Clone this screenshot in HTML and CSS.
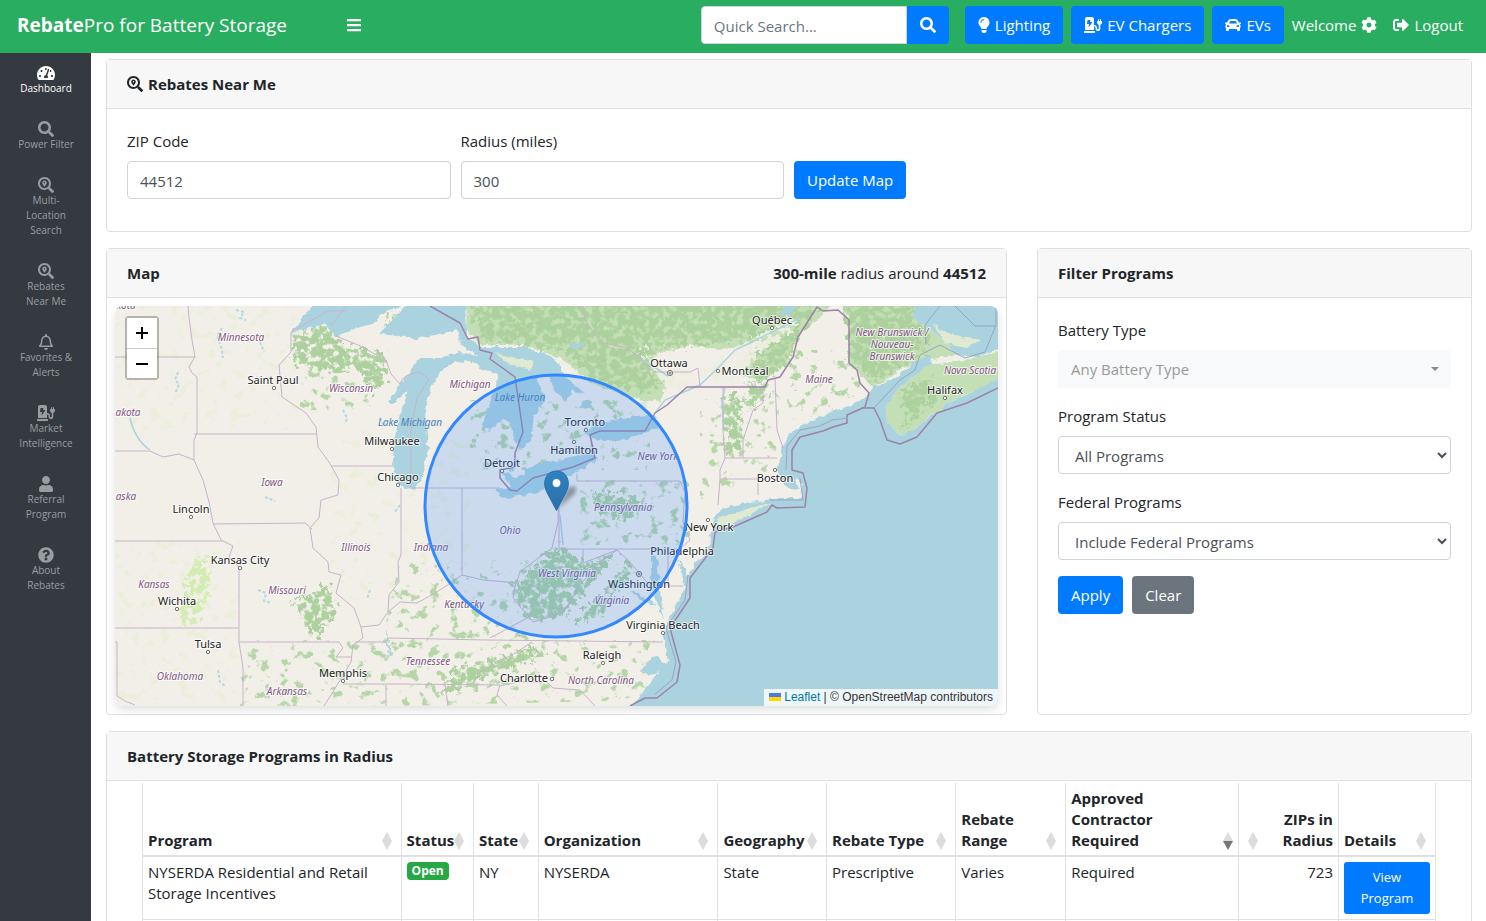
FILE: index.html
```html
<!DOCTYPE html>
<html lang="en">
<head>
<meta charset="utf-8">
<meta name="viewport" content="width=device-width, initial-scale=1">
<title>RebatePro for Battery Storage</title>
<link rel="stylesheet" href="styles.css">
</head>
<body>
<svg class="sprite" aria-hidden="true">
  <symbol id="i-search" viewBox="0 0 512 512"><path d="M505 442.7L405.3 343c-4.5-4.5-10.6-7-17-7H372c27.6-35.3 44-79.7 44-128C416 93.1 322.9 0 208 0S0 93.1 0 208s93.1 208 208 208c48.3 0 92.7-16.4 128-44v16.3c0 6.4 2.5 12.5 7 17l99.7 99.7c9.4 9.4 24.6 9.4 33.9 0l28.3-28.3c9.4-9.4 9.4-24.6.1-34zM208 336c-70.7 0-128-57.2-128-128 0-70.7 57.2-128 128-128 70.7 0 128 57.2 128 128 0 70.7-57.2 128-128 128z"/></symbol>
  <symbol id="i-locate" viewBox="0 0 512 512"><path d="M505.04 442.66l-99.71-99.69c-4.5-4.5-10.6-7-17-7h-16.3c27.6-35.3 44-79.69 44-127.99C416.03 93.09 322.92 0 208.02 0S0 93.09 0 207.98s93.11 207.98 208.02 207.98c48.3 0 92.71-16.4 128.01-44v16.3c0 6.4 2.5 12.5 7 17l99.71 99.69c9.4 9.4 24.6 9.4 33.9 0l28.3-28.3c9.4-9.4 9.4-24.59.1-33.99zm-297.02-90.7c-79.54 0-144-64.34-144-143.98 0-79.53 64.35-143.98 144-143.98 79.54 0 144 64.34 144 143.98 0 79.53-64.35 143.98-144 143.98zm.02-239.96c-40.78 0-73.84 33.05-73.84 73.83 0 32.96 48.26 93.05 66.75 114.86a9.24 9.24 0 0 0 14.18 0c18.49-21.81 66.75-81.89 66.75-114.86 0-40.78-33.06-73.83-73.84-73.83zm0 96c-13.26 0-24-10.75-24-24 0-13.26 10.75-24 24-24s24 10.74 24 24c0 13.25-10.75 24-24 24z"/></symbol>
  <symbol id="i-bars" viewBox="0 0 448 512"><path d="M16 60h416a16 16 0 0 1 16 16v40a16 16 0 0 1-16 16H16a16 16 0 0 1-16-16V76a16 16 0 0 1 16-16zm0 160h416a16 16 0 0 1 16 16v40a16 16 0 0 1-16 16H16a16 16 0 0 1-16-16v-40a16 16 0 0 1 16-16zm0 160h416a16 16 0 0 1 16 16v40a16 16 0 0 1-16 16H16a16 16 0 0 1-16-16v-40a16 16 0 0 1 16-16z"/></symbol>
  <symbol id="i-user" viewBox="0 0 448 512"><path d="M224 256c70.7 0 128-57.3 128-128S294.7 0 224 0 96 57.3 96 128s57.3 128 128 128zm89.6 32h-16.7c-22.2 10.2-46.9 16-72.9 16s-50.6-5.8-72.9-16h-16.7C60.2 288 0 348.2 0 422.4V464c0 26.5 21.5 48 48 48h352c26.5 0 48-21.5 48-48v-41.6c0-74.2-60.2-134.4-134.4-134.4z"/></symbol>
  <symbol id="i-help" viewBox="0 0 512 512"><path d="M504 256c0 136.997-111.043 248-248 248S8 392.997 8 256C8 119.083 119.043 8 256 8s248 111.083 248 248zM262.655 90c-54.497 0-89.255 22.957-116.549 63.758-3.536 5.286-2.353 12.415 2.715 16.258l34.699 26.31c5.205 3.947 12.621 3.008 16.665-2.122 17.864-22.658 30.113-35.797 57.303-35.797 20.429 0 45.698 13.148 45.698 32.958 0 14.976-12.363 22.667-32.534 33.976C247.128 238.528 216 254.941 216 296v4c0 6.627 5.373 12 12 12h56c6.627 0 12-5.373 12-12v-1.333c0-28.462 83.186-29.647 83.186-106.667 0-58.002-60.165-102-116.531-102zM256 338c-25.365 0-46 20.635-46 46 0 25.364 20.635 46 46 46s46-20.636 46-46c0-25.365-20.635-46-46-46z"/></symbol>
  <symbol id="i-bell" viewBox="0 0 448 512"><path d="M439.39 362.29c-19.32-20.76-55.47-51.99-55.47-154.29 0-77.7-54.48-139.9-127.94-155.16V32c0-17.67-14.32-32-31.98-32s-31.98 14.33-31.98 32v20.84C118.56 68.1 64.08 130.3 64.08 208c0 102.3-36.15 133.53-55.47 154.29-6 6.45-8.66 14.16-8.61 21.71.11 16.4 12.98 32 32.1 32h383.8c19.12 0 32-15.6 32.1-32 .05-7.55-2.61-15.27-8.61-21.71zM67.53 368c21.22-27.97 44.42-74.33 44.53-159.42 0-.2-.06-.38-.06-.58 0-61.86 50.14-112 112-112s112 50.14 112 112c0 .2-.06.38-.06.58.11 85.1 23.31 131.46 44.53 159.42H67.53zM224 512c35.32 0 63.97-28.65 63.97-64H160.03c0 35.35 28.65 64 63.97 64z"/></symbol>
  <symbol id="i-charge" viewBox="0 0 576 512"><path d="M336 448H16c-8.84 0-16 7.16-16 16v32c0 8.84 7.16 16 16 16h320c8.84 0 16-7.16 16-16v-32c0-8.84-7.16-16-16-16zm208-320V80c0-8.84-7.16-16-16-16s-16 7.16-16 16v48h-32V80c0-8.84-7.16-16-16-16s-16 7.16-16 16v48h-16c-8.84 0-16 7.16-16 16v32c0 35.76 23.62 65.69 56 75.93v118.49c0 13.95-9.5 26.92-23.26 29.19C431.22 402.5 416 388.99 416 372v-28c0-48.6-39.4-88-88-88h-8V64c0-35.35-28.65-64-64-64H96C60.65 0 32 28.65 32 64v352h288V304h8c22.09 0 40 17.91 40 40v24.61c0 39.67 28.92 75.16 68.41 79.01C481.71 452.05 520 416.41 520 372V251.93c32.38-10.24 56-40.17 56-75.93v-32c0-8.84-7.16-16-16-16h-16zm-283.91 47.76l-93.7 139c-2.2 3.33-6.21 5.24-10.39 5.24-7.67 0-13.47-6.28-11.67-12.92L167.35 224H108c-7.25 0-12.85-5.59-11.89-11.89l16-107C112.9 99.9 117.98 96 124 96h68c7.88 0 13.62 6.54 11.6 13.21L192 160h57.7c9.24 0 15.01 8.78 10.39 15.76z"/></symbol>
  <symbol id="i-gauge" viewBox="0 0 576 512"><path d="M288 32C128.94 32 0 160.94 0 320c0 52.8 14.25 102.26 39.06 144.8 5.61 9.62 16.3 15.2 27.44 15.2h443c11.14 0 21.83-5.58 27.44-15.2C561.75 422.26 576 372.8 576 320c0-159.06-128.94-288-288-288zm0 64c14.71 0 26.58 10.13 30.32 23.65-1.11 2.26-2.64 4.23-3.45 6.67l-9.22 27.67c-5.13 3.49-10.97 6.01-17.64 6.01-17.67 0-32-14.33-32-32S270.33 96 288 96zM96 384c-17.67 0-32-14.33-32-32s14.33-32 32-32 32 14.33 32 32-14.33 32-32 32zm48-160c-17.67 0-32-14.33-32-32s14.33-32 32-32 32 14.33 32 32-14.33 32-32 32zm246.77-72.41l-61.33 184C343.13 347.33 352 364.54 352 384c0 11.72-3.38 22.55-8.88 32H232.88c-5.5-9.45-8.88-20.28-8.88-32 0-33.94 26.5-61.43 59.9-63.59l61.34-184.01c4.17-12.56 17.73-19.45 30.36-15.17 12.57 4.19 19.35 17.79 15.17 30.36zm14.66 57.2l15.52-46.55c3.47-1.29 7.13-2.23 11.05-2.23 17.67 0 32 14.33 32 32s-14.33 32-32 32c-11.38-.01-20.89-6.28-26.57-15.22zM480 384c-17.67 0-32-14.33-32-32s14.33-32 32-32 32 14.33 32 32-14.33 32-32 32z"/></symbol>
  <symbol id="i-bulb" viewBox="0 0 352 512"><path d="M96.06 454.35c.01 6.29 1.87 12.45 5.36 17.69l17.09 25.69a31.99 31.99 0 0 0 26.64 14.28h61.71a31.99 31.99 0 0 0 26.64-14.28l17.09-25.69a31.989 31.989 0 0 0 5.36-17.69l.04-38.35H96.01l.05 38.35zM0 176c0 44.37 16.45 84.85 43.56 115.78 16.52 18.85 42.36 58.23 52.21 91.45.04.26.07.52.11.78h160.24c.04-.26.07-.51.11-.78 9.85-33.22 35.69-72.6 52.21-91.45C335.55 260.85 352 220.37 352 176 352 78.61 272.91-.3 175.45 0 73.44.31 0 82.97 0 176zm176-80c-44.11 0-80 35.89-80 80 0 8.84-7.16 16-16 16s-16-7.16-16-16c0-61.76 50.24-112 112-112 8.84 0 16 7.16 16 16s-7.16 16-16 16z"/></symbol>
  <symbol id="i-car" viewBox="0 0 512 512"><path d="M499.99 176h-59.87l-16.64-41.6C406.38 91.63 365.57 64 319.5 64h-127c-46.06 0-86.88 27.63-103.99 70.4L71.87 176H12.01C4.2 176-1.53 183.34.37 190.91l6 24C7.7 220.25 12.5 224 18.01 224h20.07C24.65 235.73 16 252.78 16 272v48c0 16.12 6.16 30.67 16 41.93V416c0 17.67 14.33 32 32 32h32c17.67 0 32-14.33 32-32v-32h256v32c0 17.67 14.33 32 32 32h32c17.67 0 32-14.33 32-32v-54.07c9.84-11.25 16-25.8 16-41.93v-48c0-19.22-8.65-36.27-22.07-48H494c5.51 0 10.31-3.75 11.64-9.09l6-24c1.89-7.57-3.84-14.91-11.65-14.91zm-352.06-17.83c7.29-18.22 24.94-30.17 44.57-30.17h127c19.63 0 37.28 11.95 44.57 30.17L384 208H128l19.93-49.83zM96 319.8c-19.2 0-32-12.76-32-31.9S76.8 256 96 256s48 28.71 48 47.85-28.8 15.95-48 15.95zm320 0c-19.2 0-48 3.19-48-15.95S396.8 256 416 256s32 12.76 32 31.9-12.8 31.9-32 31.9z"/></symbol>
  <symbol id="i-cog" viewBox="0 0 512 512"><path d="M487.4 315.7l-42.6-24.6c4.3-23.2 4.3-47 0-70.2l42.6-24.6c4.9-2.8 7.1-8.6 5.5-14-11.1-35.6-30-67.8-54.7-94.6-3.8-4.1-10-5.1-14.8-2.3L380.8 110c-17.9-15.4-38.5-27.3-60.8-35.1V25.8c0-5.6-3.9-10.5-9.4-11.7-36.7-8.2-74.3-7.8-109.2 0-5.5 1.2-9.4 6.1-9.4 11.7V75c-22.2 7.9-42.8 19.8-60.8 35.1L88.7 85.5c-4.9-2.8-11-1.9-14.8 2.3-24.7 26.7-43.6 58.9-54.7 94.6-1.7 5.4.6 11.2 5.5 14L67.3 221c-4.3 23.2-4.3 47 0 70.2l-42.6 24.6c-4.9 2.8-7.1 8.6-5.5 14 11.1 35.6 30 67.8 54.7 94.6 3.8 4.1 10 5.1 14.8 2.3l42.6-24.6c17.9 15.4 38.5 27.3 60.8 35.1v49.2c0 5.6 3.9 10.5 9.4 11.7 36.7 8.2 74.3 7.8 109.2 0 5.5-1.2 9.4-6.1 9.4-11.7v-49.2c22.2-7.9 42.8-19.8 60.8-35.1l42.6 24.6c4.9 2.8 11 1.9 14.8-2.3 24.7-26.7 43.6-58.9 54.7-94.6 1.5-5.5-.7-11.3-5.6-14.1zM256 336c-44.1 0-80-35.9-80-80s35.9-80 80-80 80 35.9 80 80-35.9 80-80 80z"/></symbol>
  <symbol id="i-logout" viewBox="0 0 512 512"><path d="M497 273L329 441c-15 15-41 4.5-41-17v-96H152c-13.3 0-24-10.7-24-24v-96c0-13.3 10.7-24 24-24h136V88c0-21.4 25.9-32 41-17l168 168c9.3 9.4 9.3 24.6 0 34zM192 436v-40c0-6.6-5.4-12-12-12H96c-17.7 0-32-14.3-32-32V160c0-17.7 14.3-32 32-32h84c6.6 0 12-5.4 12-12V76c0-6.6-5.4-12-12-12H96c-53 0-96 43-96 96v192c0 53 43 96 96 96h84c6.6 0 12-5.4 12-12z"/></symbol>
  <symbol id="i-sort" viewBox="0 0 10 18"><path class="sort-up" d="M5 0l5 9H0z"/><path class="sort-down" d="M0 9h10l-5 9z"/></symbol>
</svg>

<header class="topbar">
  <a class="brand" href="#"><b>Rebate</b>Pro for Battery Storage</a>
  <button class="menu-toggle" type="button" aria-label="Toggle menu"><svg class="icon icon-14"><use href="#i-bars"/></svg></button>
  <form class="quick-search">
    <input class="quick-input" type="search" placeholder="Quick Search..." aria-label="Quick Search">
    <button class="quick-button" type="submit" aria-label="Search"><svg class="icon icon-16"><use href="#i-search"/></svg></button>
  </form>
  <nav class="top-links">
    <a class="btn btn-primary" href="#"><svg class="icon icon-bulb"><use href="#i-bulb"/></svg>Lighting</a>
    <a class="btn btn-primary" href="#"><svg class="icon icon-18"><use href="#i-charge"/></svg>EV Chargers</a>
    <a class="btn btn-primary" href="#"><svg class="icon icon-16"><use href="#i-car"/></svg>EVs</a>
    <a class="top-link" href="#">Welcome<svg class="icon icon-16"><use href="#i-cog"/></svg></a>
    <a class="top-link logout" href="#"><svg class="icon icon-16"><use href="#i-logout"/></svg>Logout</a>
  </nav>
</header>

<div class="layout">
  <nav class="sidebar">
    <a class="side-link active" href="#"><svg class="icon icon-side"><use href="#i-gauge"/></svg>Dashboard</a>
    <a class="side-link" href="#"><svg class="icon icon-side"><use href="#i-search"/></svg>Power Filter</a>
    <a class="side-link" href="#"><svg class="icon icon-side"><use href="#i-locate"/></svg>Multi-<br>Location<br>Search</a>
    <a class="side-link" href="#"><svg class="icon icon-side"><use href="#i-locate"/></svg>Rebates<br>Near Me</a>
    <a class="side-link" href="#"><svg class="icon icon-side"><use href="#i-bell"/></svg>Favorites &amp;<br>Alerts</a>
    <a class="side-link" href="#"><svg class="icon icon-side"><use href="#i-charge"/></svg>Market<br>Intelligence</a>
    <a class="side-link" href="#"><svg class="icon icon-side"><use href="#i-user"/></svg>Referral<br>Program</a>
    <a class="side-link" href="#"><svg class="icon icon-side"><use href="#i-help"/></svg>About<br>Rebates</a>
  </nav>

  <main class="content">
    <section class="card">
      <h2 class="card-header"><span class="header-title"><svg class="icon icon-16"><use href="#i-locate"/></svg>Rebates Near Me</span></h2>
      <form class="near-form">
        <div class="field">
          <label for="zip">ZIP Code</label>
          <input class="control" id="zip" type="text" value="44512">
        </div>
        <div class="field">
          <label for="radius">Radius (miles)</label>
          <input class="control" id="radius" type="text" value="300">
        </div>
        <div class="form-action"><button class="btn btn-primary" type="submit">Update Map</button></div>
      </form>
    </section>

    <div class="split">
      <section class="card">
        <h2 class="card-header">Map<span class="radius-note"><b>300-mile</b> radius around <b>44512</b></span></h2>
        <div class="map-body">
          <div class="map">
            <svg class="map-canvas" viewBox="115 306 883 400" preserveAspectRatio="xMidYMid slice" role="img" aria-label="Map of rebate programs">
              <defs>
                <filter id="rough" x="-5%" y="-5%" width="110%" height="110%">
                  <feTurbulence type="fractalNoise" baseFrequency="0.15" numOctaves="3" seed="4" result="n"/>
                  <feDisplacementMap in="SourceGraphic" in2="n" scale="6" xChannelSelector="R" yChannelSelector="G"/>
                </filter>
                <filter id="mottle" x="-5%" y="-5%" width="110%" height="110%">
                  <feTurbulence type="fractalNoise" baseFrequency="0.16" numOctaves="4" seed="9" result="n"/>
                  <feDisplacementMap in="SourceGraphic" in2="n" scale="22" xChannelSelector="R" yChannelSelector="G" result="d"/>
                  <feColorMatrix in="n" type="matrix" values="0 0 0 0 0  0 0 0 0 0  0 0 0 0 0  0 0 6 0 -2" result="m"/>
                  <feComposite in="d" in2="m" operator="in"/>
                </filter>
                <filter id="sparse" x="-5%" y="-5%" width="110%" height="110%">
                  <feTurbulence type="fractalNoise" baseFrequency="0.1" numOctaves="5" seed="22" result="n"/>
                  <feColorMatrix in="n" type="matrix" values="0 0 0 0 0  0 0 0 0 0  0 0 0 0 0  0 9 0 0 -5.3" result="m"/>
                  <feComposite in="SourceGraphic" in2="m" operator="in"/>
                </filter>
                <filter id="soft"><feGaussianBlur stdDeviation="2"/></filter>
                <linearGradient id="pin" x1="0" y1="0" x2="0" y2="1"><stop offset="0" stop-color="#2e83c4"/><stop offset="1" stop-color="#2a6ea6"/></linearGradient>
              </defs>
              <rect class="land" x="115" y="306" width="883" height="400"/>
              <g class="pale" filter="url(#sparse)">
                <path d="M115 306H300V430H115zM115 540H240V706H115zM330 430H470V600H330z"/>
              </g>
              <g class="green" filter="url(#sparse)">
                <path d="M400 560L470 570 530 640 660 640 640 700 400 706 380 650zM300 640H400V706H240V640zM700 400L780 390 775 470 700 500zM780 350H860V410L790 420zM470 400H650V470H470zM580 480H690V545H580zM480 560H560V620H480zM300 370H370V410H300z"/>
              </g>
              <g class="green base" filter="url(#rough)">
                <path d="M467 300H835L815 322 798 337 785 365 765 380 740 375 760 340 725 350 690 345 660 352 650 365 668 385 660 402 630 398 590 382 560 358 525 345 480 345 466 328z"/>
                <path d="M838 300H915L913 318 932 330 957 355 915 362 873 387 860 375 849 362 849 320z"/>
                <path d="M930 363L957 362 1006 350V377L947 403 913 430 900 435 887 422 885 407 897 390 913 377z"/>
                <path d="M1006 306V345L990 348 992 330z"/>
              </g>
              <g class="green deep" filter="url(#mottle)">
                <path d="M470 300H825L798 337 785 365 765 378 740 370 765 338 725 342 690 345 660 348 645 358 660 385 650 395 600 382 560 350 480 340z"/>
                <path d="M840 300H910L930 335 925 355 873 382 852 360z"/>
                <path d="M291 334L325 326 345 345 385 355 388 380 375 392 355 368 320 372 294 362z"/>
                <path d="M724 395H742L740 450 725 455zM745 385L768 375 765 400 750 410z"/>
                <path d="M530 568L560 545 585 565 600 558 617 552 580 598 565 614 535 622 515 600 517 585z"/>
                <path d="M530 568L560 545 585 565 600 558 617 552 580 598 565 614 535 622 515 600 517 585z"/>
                <path d="M592 494H626L642 506 626 522 600 515z"/>
                <path d="M570 625L610 585 625 560 632 570 600 615z"/>
                <path d="M292 602L330 585 335 612 318 640 305 625z"/>
                <path d="M455 668L500 660 530 645 545 655 480 680 440 695z"/>
                <path d="M388 312L400 316 386 330zM900 390L930 378 940 398 905 428z"/>
              </g>
              <g class="lime" filter="url(#mottle)"><path d="M190 565L205 555 210 590 195 625 180 620z"/></g>
              <g class="valley" filter="url(#mottle)"><path d="M690 375L735 350 790 318 800 325 760 352 735 385zM640 350L680 365 700 385 670 392z"/></g>
              <g class="water" filter="url(#rough)">
                <path d="M317 300L291 333 325 324 336 336 353 330 373 322 389 310 406 306 379 334 400 336 417 339 443 333 457 330 460 343 478 356 460 352 440 358 420 358 404 378 389 401 393 403 408 390 400 415 394 440 393 470 398 484 406 490 415 489 421 480 428 450 425 410 430 390 438 374 450 365 466 360 497 375 496 387 486 412 482 428 490 431 503 418 512 424 514 440 520 449 531 441 534 415 545 400 537 377 548 376 556 392 566 402 572 390 585 395 567 378 555 358 525 347 480 347 467 335 465 318 468 300z"/>
                <path d="M502 471L510 488 495 490 505 498 537 493 563 478 580 471 597 458 590 452 567 458 535 465 517 478z"/>
                <path d="M583 432L600 422 627 418 657 415 657 428 627 440 603 442z"/>
                <path d="M508 465l8-2-2 8-6 2zM582 401l9 1-3 7-5-2zM785 304l14 0-11 12-7-2zM568 344l16-2v5l-12 1z"/>
                <path d="M915 300H1006V346L977 357 957 355 932 330 913 318z"/>
                <path d="M1006 374L967 395 947 403 930 417 913 430 900 435 887 422 885 407 897 390 913 377 930 363 932 355 913 363 897 377 873 387 867 397 847 407 827 413 807 423 790 433 783 447 780 460 777 470 783 484 790 489 799 490 796 478 802 482 802 498 780 498 750 502 722 508 714 516 712 532 710 542 703 555 687 575 678 558 682 578 685 588 677 605 667 622 663 636 668 662 650 682 627 714H1006z"/>
                <path d="M652 555L650 580 657 602 664 622 660 590 657 558z"/>
                <path d="M643 596L630 590 640 600 660 607zM640 672L655 655 668 665 655 675zM386 630l3 10 2 18-4-12z"/>
              </g>
              <g class="river">
                <path d="M725 388L722 402 724 430M800 318L760 338 735 350 718 368 700 385 665 400 655 413M640 358L668 376M130 418Q135 440 150 450M560 515l3 30"/>
              </g>
              <g class="brook">
                <path d="M236 310l8 2-4 6 6 2M222 328l-5 8 4 10 2 12M178 372l-3 8 4 4-4 10M260 342l4 10M343 410l4 8-2 6M400 505l-6 8M265 497l10 4M258 590l8 3-2 8 8 2M218 670l2 12 5 4M389 640l-1 20M370 590l-3 9M380 418l4 8"/>
              </g>
              <g class="island" filter="url(#rough)">
                <path d="M933 323L945 332 960 337 982 340 967 348 945 344z"/>
                <path d="M717 519L763 504 770 504 733 523 717 526z"/>
                <path d="M495 353L525 360 535 362 530 370 505 362z"/>
              </g>
              <g class="state">
                <path d="M188 306L189 318 192 340 195 357 189 367 192 373 197 377V433M115 357H195M194 434H316M115 451H150L163 457 179 454 194 460 194 440 197 433M194 460L203 480 209 502 213 523 221 540 233 546 229 557 239 567V642L243 668V706M115 541H222M115 628H238M213 524L305 523 312 529M239 642H339L343 648 336 657H351M115 642H117V696L125 701 135 705"/>
                <path d="M291 332V352L279 365 282 397 306 413 316 427 318 447 329 462 339 480 338 495 321 500 319 518 310 528 313 548 328 562 329 572 341 575 336 593 354 608 361 627 379 625 388 612 389 595 399 582 398 562 401 555V488M361 627L363 638 353 645 351 662 343 675 333 692 324 706M355 642H386L389 638 487 640 663 642M343 684H400L500 685M386 685V706M445 685L448 706"/>
                <path d="M388 612L400 602 417 603 437 592 462 575 483 580 507 582 515 587 520 572 533 562 552 548 558 522 559 478V549H680M412 488H462V575M462 488H500M331 466H393M577 481H680L685 492 683 522 690 540 680 549M577 474V481M515 587L513 598 533 622 563 613 580 585 600 562 617 550 583 563V549M617 550L630 562 645 580 655 590M490 638L527 618M532 642L517 652 480 672 473 684M500 685L497 695 507 706M500 686L517 682H547L553 688 580 690 595 706M668 549V586H683"/>
                <path d="M775 378L777 430 783 448M763 390V403L753 410 743 440V458M723 387V430L725 458 720 470V479L718 505M725 458H777M720 479H758V495M583 306L585 320 600 342 627 348 640 358 653 372 690 372 698 368 700 387M336 336L358 345 386 360 391 374 400 384M331 326L346 306M291 332L328 311H346M400 384Q402 374 420 372L429 379 417 398 411 430V488"/>
              </g>
              <g class="nation">
                <path d="M430 306L460 323 468 339 478 337 480 350 492 353 490 359 515 377 523 432 515 453V467L500 470V478L510 490 517 491 533 478 573 467 595 458 590 435 600 431H645L655 413 667 405 687 387H765L768 380 780 377 793 357 798 337 817 307 823 311 838 310 849 320V363L857 370 860 383 869 393 865 407"/>
                <path d="M865 407L847 415V423L833 427 823 431 800 437 792 450V470L803 473 807 488 805 507 777 508 772 505 767 512 733 527 715 532 713 548 700 565 690 578V598L670 628 680 665 677 682 657 698 645 698 630 706M861 408L874 408 880 420 887 440 900 444 917 437 937 413 967 403 998 388"/>
              </g>
              <g class="sea">
                <path d="M874 408L900 380 915 370 920 355 940 345 965 358 985 352 996 325V306M940 306L925 325 926 345M955 306L975 326H996M848 418L832 420 820 426 800 430 787 446 786 470M800 478L803 500 770 500M688 575L685 600 666 628 676 662 672 680 655 694"/>
              </g>
              <g class="towns">
                <circle cx="274" cy="388" r="1.7"/><circle cx="392" cy="449" r="1.7"/><circle cx="398" cy="485" r="1.7"/><circle cx="191" cy="517" r="1.7"/><circle cx="240" cy="568" r="1.7"/><circle cx="177" cy="609" r="1.7"/><circle cx="208" cy="652" r="1.7"/><circle cx="343" cy="681" r="1.7"/><circle cx="586" cy="430" r="1.7"/><circle cx="574" cy="442" r="1.7"/><circle cx="502" cy="471" r="1.7"/><circle cx="772" cy="328" r="1.7"/><circle cx="718" cy="371" r="1.7"/><circle cx="945" cy="398" r="1.7"/><circle cx="775" cy="470" r="1.7"/><circle cx="708" cy="520" r="1.7"/><circle cx="663" cy="633" r="1.7"/><circle cx="603" cy="663" r="1.7"/><circle cx="552" cy="679" r="1.7"/><circle cx="670" cy="373" r="2.6"/><circle cx="670" cy="373" r="1"/><circle cx="639" cy="574" r="2.6"/><circle cx="639" cy="574" r="1"/>
              </g>
              <g class="region">
                <text x="241" y="341">Minnesota</text><text x="351" y="392">Wisconsin</text><text x="470" y="388">Michigan</text><text x="272" y="486">Iowa</text><text x="356" y="551">Illinois</text><text x="431" y="551">Indiana</text><text x="510" y="534">Ohio</text><text x="154" y="588">Kansas</text><text x="287" y="594">Missouri</text><text x="180" y="680">Oklahoma</text><text x="287" y="695">Arkansas</text><text x="464" y="608">Kentucky</text><text x="428" y="665">Tennessee</text><text x="601" y="684">North Carolina</text><text x="567" y="577">West Virginia</text><text x="612" y="604">Virginia</text><text x="623" y="511">Pennsylvania</text><text x="658" y="460">New York</text><text x="819" y="383">Maine</text><text x="892" y="336">New Brunswick /</text><text x="892" y="348">Nouveau-</text><text x="892" y="360">Brunswick</text><text x="970" y="374">Nova Scotia</text><text x="128" y="416">akota</text><text x="126" y="309">kota</text><text x="126" y="500">aska</text>
              </g>
              <g class="lake"><text x="520" y="401">Lake Huron</text><text x="410" y="426">Lake Michigan</text></g>
              <g class="city">
                <text x="273" y="384">Saint Paul</text><text x="392" y="445">Milwaukee</text><text x="398" y="481">Chicago</text><text x="191" y="513">Lincoln</text><text x="240" y="564">Kansas City</text><text x="177" y="605">Wichita</text><text x="208" y="648">Tulsa</text><text x="343" y="677">Memphis</text><text x="524" y="682">Charlotte</text><text x="602" y="659">Raleigh</text><text x="663" y="629">Virginia Beach</text><text x="639" y="588">Washington</text><text x="682" y="555">Philadelphia</text><text x="709" y="531">New York</text><text x="775" y="482">Boston</text><text x="502" y="467">Detroit</text><text x="574" y="454">Hamilton</text><text x="585" y="426">Toronto</text><text x="669" y="367">Ottawa</text><text x="745" y="375">Montréal</text><text x="772" y="324">Québec</text><text x="945" y="394">Halifax</text>
              </g>
              <circle class="radius" cx="556" cy="506" r="131"/>
              <path class="pin-shadow" filter="url(#soft)" d="M557 510L568 488 575 486 576 492z"/>
              <path class="pin" d="M556.500 510.500L546.500 491.500C542 482 546 471 556.500 471S571 482 566.500 491.500z"/>
              <circle class="pin-eye" cx="556.500" cy="483" r="4.500"/>
            </svg>
            <div class="zoom">
              <button class="zoom-button" type="button" aria-label="Zoom in"><svg class="zoom-icon" viewBox="0 0 14 14"><path d="M7 1v12M1 7h12"/></svg></button>
              <button class="zoom-button" type="button" aria-label="Zoom out"><svg class="zoom-icon" viewBox="0 0 14 14"><path d="M1 7h12"/></svg></button>
            </div>
            <div class="attribution"><svg class="flag" viewBox="0 0 12 8"><path fill="#4c7be1" d="M0 0h12v4H0z"/><path fill="#ffd500" d="M0 4h12v4H0z"/></svg> <a href="#">Leaflet</a> | © OpenStreetMap contributors</div>
          </div>
        </div>
      </section>

      <section class="card">
        <h2 class="card-header">Filter Programs</h2>
        <form class="filter-form">
          <div class="field">
            <label for="battery">Battery Type</label>
            <div class="picker"><select class="control picker-select" id="battery"><option>Any Battery Type</option></select></div>
          </div>
          <div class="field">
            <label for="status">Program Status</label>
            <select class="control" id="status"><option>All Programs</option></select>
          </div>
          <div class="field">
            <label for="federal">Federal Programs</label>
            <select class="control" id="federal"><option>Include Federal Programs</option></select>
          </div>
          <div class="actions">
            <button class="btn btn-primary" type="submit">Apply</button>
            <button class="btn btn-secondary" type="reset">Clear</button>
          </div>
        </form>
      </section>
    </div>

    <section class="card">
      <h2 class="card-header">Battery Storage Programs in Radius</h2>
      <div class="table-body">
        <table class="programs">
          <colgroup><col class="c-program"><col class="c-status"><col class="c-state"><col class="c-org"><col class="c-geo"><col class="c-type"><col class="c-range"><col class="c-req"><col class="c-zips"><col class="c-details"></colgroup>
          <thead>
            <tr>
              <th scope="col"><div class="th">Program<svg class="sort"><use href="#i-sort"/></svg></div></th>
              <th scope="col"><div class="th">Status<svg class="sort"><use href="#i-sort"/></svg></div></th>
              <th scope="col"><div class="th">State<svg class="sort"><use href="#i-sort"/></svg></div></th>
              <th scope="col"><div class="th">Organization<svg class="sort"><use href="#i-sort"/></svg></div></th>
              <th scope="col"><div class="th">Geography<svg class="sort"><use href="#i-sort"/></svg></div></th>
              <th scope="col"><div class="th">Rebate Type<svg class="sort"><use href="#i-sort"/></svg></div></th>
              <th scope="col"><div class="th">Rebate<br>Range<svg class="sort"><use href="#i-sort"/></svg></div></th>
              <th scope="col" aria-sort="descending"><div class="th">Approved<br>Contractor<br>Required<svg class="sort sorted"><use href="#i-sort"/></svg></div></th>
              <th scope="col"><div class="th th-number">ZIPs in<br>Radius<svg class="sort"><use href="#i-sort"/></svg></div></th>
              <th scope="col"><div class="th">Details<svg class="sort"><use href="#i-sort"/></svg></div></th>
            </tr>
          </thead>
          <tbody>
            <tr>
              <td>NYSERDA Residential and Retail Storage Incentives</td>
              <td><span class="badge">Open</span></td>
              <td>NY</td>
              <td>NYSERDA</td>
              <td>State</td>
              <td>Prescriptive</td>
              <td>Varies</td>
              <td>Required</td>
              <td class="number">723</td>
              <td><a class="btn btn-primary btn-small" href="#">View Program</a></td>
            </tr>
            <tr class="blank"><td></td><td></td><td></td><td></td><td></td><td></td><td></td><td></td><td></td><td></td></tr>
          </tbody>
        </table>
      </div>
    </section>
  </main>
</div>
</body>
</html>
```
FILE: styles.css
```css
* { box-sizing: border-box; }

body {
  margin: 0;
  height: 100vh;
  overflow: hidden;
  display: flex;
  flex-direction: column;
  background: #fff;
  color: #212529;
  font: 15px/24px "Open Sans", "Noto Sans", sans-serif;
}

a { color: inherit; text-decoration: none; }
button, input, select { font: inherit; }
b, th, h2 { font-weight: 700; }

.sprite { position: absolute; width: 0; height: 0; }
.icon { flex: none; fill: currentColor; }
.icon-14 { width: 14px; height: 16px; }
.icon-16 { width: 16px; height: 16px; }
.icon-18 { width: 18px; height: 16px; }
.icon-bulb { width: 12px; height: 16px; }
.icon-side { width: 18px; height: 16px; }

/* Top bar */
.topbar {
  flex: none;
  display: flex;
  align-items: center;
  height: 53px;
  padding: 0 23px 3px 17px;
  background: #29ae61;
  color: #fff;
}
.brand { font-size: 19px; white-space: nowrap; }
.menu-toggle {
  display: flex;
  margin-left: 60px;
  padding: 0;
  border: 0;
  background: none;
  color: inherit;
}
.quick-search { display: flex; margin-left: auto; }
.quick-input {
  width: 206px;
  height: 38px;
  padding: 2px 12px 0;
  border: 1px solid #ced4da;
  border-radius: 4px 0 0 4px;
  background: #fff;
  color: #495057;
}
.quick-input::placeholder { color: #6c757d; opacity: 1; }
.quick-button {
  display: flex;
  align-items: center;
  justify-content: center;
  width: 42px;
  padding: 0;
  border: 0;
  border-radius: 0 4px 4px 0;
  background: #007bff;
  color: #fff;
}
.top-links { display: flex; align-items: center; gap: 8px; margin-left: 16px; }
.top-link { display: flex; align-items: center; gap: 5px; }
.logout { margin-left: 8px; }

.btn {
  display: inline-flex;
  align-items: center;
  justify-content: center;
  gap: 5px;
  min-height: 38px;
  padding: 6px 12px;
  border: 1px solid transparent;
  border-radius: 4px;
  color: #fff;
  text-align: center;
}
.btn-primary { background: #007bff; }
.btn-secondary { background: #6c757d; }
.btn-small { width: 100%; padding: 4px 8px; font-size: 13px; line-height: 21px; border-radius: 3px; }

/* Page frame */
.layout { flex: 1; min-height: 0; display: flex; }
.sidebar {
  flex: none;
  width: 91px;
  padding-top: 12px;
  padding-left: 1px;
  background: #343a40;
  font-size: 10px;
  line-height: 15px;
  text-align: center;
}
.side-link {
  display: flex;
  flex-direction: column;
  align-items: center;
  padding-bottom: 25px;
  color: #9a9da0;
}
.active { color: #fff; }
.content {
  flex: 1;
  min-width: 0;
  overflow: hidden;
  display: flex;
  flex-direction: column;
  gap: 16px;
  padding: 6px 14px 0 15px;
}

.card { flex: none; min-width: 0; border: 1px solid #dfdfdf; border-radius: 4px; background: #fff; }
.card-header {
  display: flex;
  justify-content: space-between;
  margin: 0;
  padding: 12px 20px;
  border-bottom: 1px solid #dfdfdf;
  background: #f7f7f7;
  font-size: 15px;
  line-height: 24px;
}
.header-title { display: flex; align-items: center; gap: 5px; }
.radius-note { font-weight: 400; }

.near-form {
  display: grid;
  grid-template-columns: repeat(4, 1fr);
  gap: 10px;
  align-items: end;
  padding: 20px 20px 32px;
}
.form-action { display: flex; }
.field { display: flex; flex-direction: column; gap: 8px; }
.control {
  width: 100%;
  height: 38px;
  padding: 2px 12px 0;
  border: 1px solid #ced4da;
  border-radius: 4px;
  background: #fff;
  color: #495057;
}

.split { flex: none; display: grid; grid-template-columns: minmax(0, 901fr) minmax(0, 435fr); gap: 30px; }
.filter-form { display: flex; flex-direction: column; gap: 16px; padding: 20px; }
.picker { position: relative; }
.picker-select { appearance: none; padding-top: 0; border-color: #f8f9fa; background: #f8f9fa; color: #999; }
.picker::after {
  content: "";
  position: absolute;
  right: 12px;
  top: 17px;
  border: 4px solid transparent;
  border-top-color: #888;
  border-bottom: 0;
}
.actions { display: flex; gap: 9px; }

/* Map */
.map-body { padding: 8px; }
.map {
  position: relative;
  height: 400px;
  overflow: hidden;
  border-radius: 8px;
  box-shadow: 0 4px 8px rgba(0, 0, 0, 0.12);
  font: 12px/17px "Liberation Sans", Arial, sans-serif;
}
.map-canvas { display: block; width: 100%; height: 100%; }
.land { fill: #f2efe9; }
.pale { fill: #e6eecf; opacity: 0.6; }
.green { fill: #b5d6a7; }
.base { fill: #c4dfb5; }
.deep { fill: #add19e; }
.lime { fill: #d3ecb2; }
.valley { fill: #edeee0; }
.island { fill: #e0ead0; }
.water { fill: #aad3df; }
.river { fill: none; stroke: #aad3df; stroke-width: 1.5; }
.brook { fill: none; stroke: #b4d9e4; stroke-width: 2; stroke-dasharray: 3 2; }
.state { fill: none; stroke: #c8b3ca; stroke-width: 1; stroke-linejoin: round; }
.nation { fill: none; stroke: #9c83a9; stroke-width: 1.5; stroke-linejoin: round; }
.sea { fill: none; stroke: #98a5c4; stroke-width: 1; stroke-linejoin: round; }
.towns { fill: #f6f6f4; stroke: #666; stroke-width: 0.9; }
.city, .region, .lake {
  font-family: "Noto Sans", sans-serif;
  text-anchor: middle;
  paint-order: stroke;
  stroke: rgba(255, 255, 255, 0.7);
  stroke-width: 2px;
  stroke-linejoin: round;
}
.city { font-size: 11px; fill: #222; }
.region { font-size: 10px; font-style: italic; fill: #82557f; }
.lake { font-size: 10px; font-style: italic; fill: #4d80b3; stroke: none; }
.radius { fill: rgba(51, 136, 255, 0.2); stroke: #3388ff; stroke-width: 3; }
.pin { fill: url(#pin); stroke: #2570ad; stroke-width: 1; }
.pin-eye { fill: #fff; stroke: #2c6fa5; stroke-width: 1; }
.pin-shadow { fill: rgba(0, 0, 0, 0.35); }
.zoom {
  position: absolute;
  top: 10px;
  left: 10px;
  border: 2px solid rgba(0, 0, 0, 0.25);
  border-radius: 4px;
  background-clip: padding-box;
}
.zoom-button {
  display: grid;
  place-items: center;
  width: 30px;
  height: 30px;
  padding: 0;
  border: 0;
  background: #fff;
}
.zoom-button + .zoom-button { border-top: 1px solid #ccc; }
.zoom-icon { width: 14px; height: 14px; stroke: #000; stroke-width: 2; }
.attribution {
  position: absolute;
  right: 0;
  bottom: 0;
  padding: 0 5px;
  background: rgba(255, 255, 255, 0.8);
  color: #333;
}
.attribution a { color: #0078a8; }
.flag { width: 12px; height: 8px; }

/* Programs table */
.table-body { padding: 2px 35px 16px; }
.programs { width: 100%; table-layout: fixed; border-collapse: collapse; line-height: 21px; }
.c-program { width: 20%; }
.c-status { width: 5.6%; }
.c-state { width: 5%; }
.c-org { width: 13.9%; }
.c-geo { width: 8.4%; }
.c-type { width: 10%; }
.c-range { width: 8.5%; }
.c-req { width: 13.4%; }
.c-zips { width: 7.7%; }
.c-details { width: 7.5%; }
.programs th, .programs td { padding: 5px; border: 1px solid #dee2e6; text-align: left; vertical-align: top; }
.programs th { border-top: 0; border-bottom-width: 2px; padding-bottom: 4px; vertical-align: bottom; }
.th { position: relative; white-space: nowrap; }
.programs .number, .th-number { text-align: right; }
.sort { position: absolute; right: 4px; bottom: 1px; width: 10px; height: 18px; fill: #dcdcdc; }
.sorted { --down: #777; right: 0; }
.sort-down { fill: var(--down, #dcdcdc); }
.th-number .sort { right: auto; left: 4px; }
.badge {
  display: block;
  width: max-content;
  padding: 0 5px;
  border-radius: 4px;
  background: #28a745;
  color: #fff;
  font-size: 12px;
  font-weight: 700;
  line-height: 18px;
}
.blank td { height: 60px; }
```
